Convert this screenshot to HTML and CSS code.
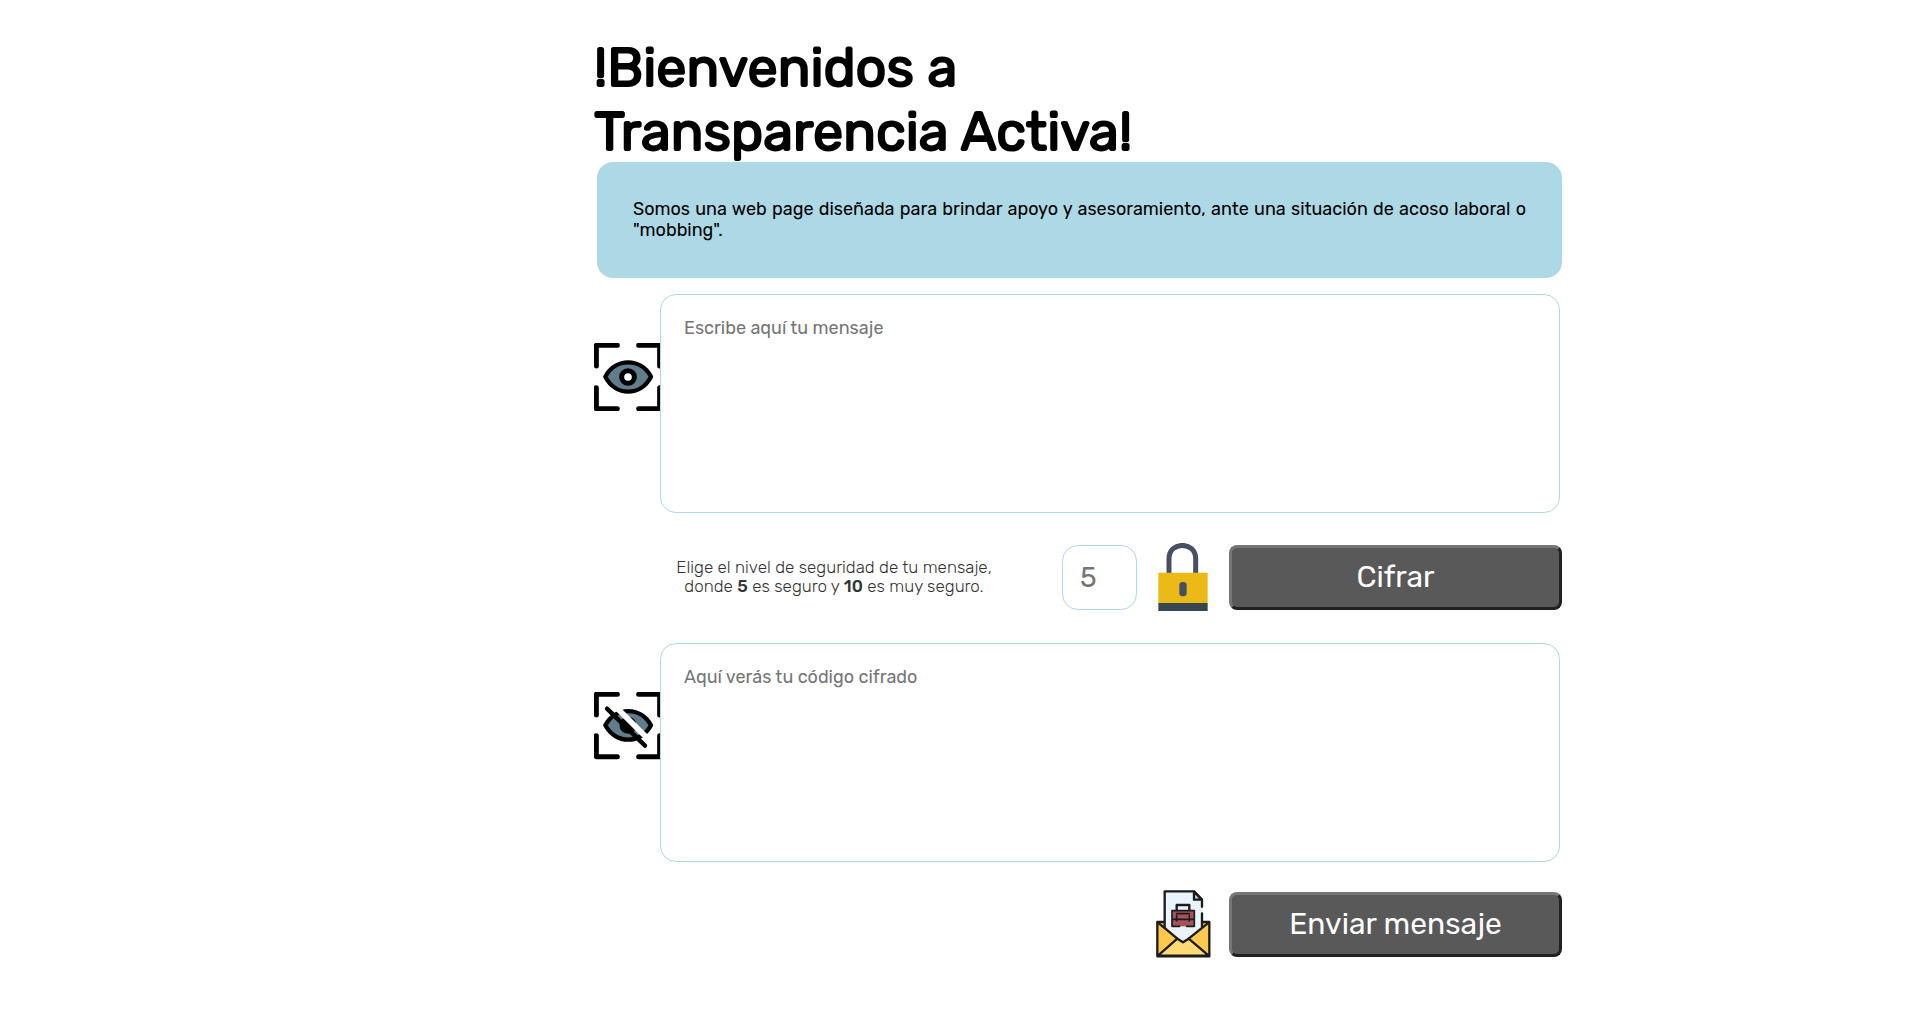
FILE: index.html
```html
<!DOCTYPE html>
<html lang="es">
<head>
<meta charset="utf-8">
<meta name="viewport" content="width=device-width, initial-scale=1">
<title>Transparencia Activa</title>
<link rel="stylesheet" href="styles.css">
</head>
<body>
<main class="page">
  <h1 class="title">!Bienvenidos a<br>Transparencia Activa!</h1>
  <p class="intro">Somos una web page diseñada para brindar apoyo y asesoramiento, ante una situación de acoso laboral o "mobbing".</p>
  <form class="cipher">
    <div class="field">
      <svg class="field-icon" viewBox="27 36 198 204" aria-hidden="true">
        <g fill="none" stroke="#000" stroke-width="15" stroke-linecap="round" stroke-linejoin="round">
          <path d="M97 43H34V105M161 43H224V105M34 170V233H97M224 170V233H161"/>
          <path fill="#607d8b" stroke-width="13" d="M61 137C92 80 167 80 198 137C167 197 92 197 61 137Z"/>
          <circle cx="129" cy="138" r="19" fill="#fff"/>
        </g>
      </svg>
      <textarea class="message" aria-label="Mensaje" placeholder="Escribe aquí tu mensaje"></textarea>
    </div>
    <div class="actions">
      <label class="hint" for="level">Elige el nivel de seguridad de tu mensaje,<br>donde <b>5</b> es seguro y <b>10</b> es muy seguro.</label>
      <input class="level" id="level" type="number" min="5" max="10" placeholder="5">
      <svg class="action-icon" viewBox="27 39 204 204" aria-hidden="true">
        <path d="M87 132V86C87 33 167 33 167 86V132" fill="none" stroke="#464f66" stroke-width="15"/>
        <path fill="#ebba16" d="M55 128H203V220H55Z"/>
        <path fill="#37474f" d="M55 219H203V243H55Z"/>
        <rect x="118" y="156" width="22" height="43" rx="10" fill="#464f66"/>
      </svg>
      <button class="button" type="button">Cifrar</button>
    </div>
    <div class="field">
      <svg class="field-icon" viewBox="27 30 198 204" aria-hidden="true">
        <g fill="none" stroke="#000" stroke-width="15" stroke-linecap="round" stroke-linejoin="round">
          <path d="M97 37H34V99M161 37H224V99M34 161V224H97M224 161V224H161"/>
          <path fill="#607d8b" stroke-width="13" d="M61 130C92 73 167 73 198 130C167 187 92 187 61 130Z"/>
          <circle cx="129" cy="130" r="18" fill="#000"/>
          <path stroke="#fff" stroke-width="17" stroke-linecap="butt" d="M80 62L196 178"/>
          <path stroke-width="13" d="M66 80L180 191"/>
        </g>
      </svg>
      <textarea class="message" aria-label="Código cifrado" placeholder="Aquí verás tu código cifrado"></textarea>
    </div>
    <div class="actions">
      <svg class="action-icon" viewBox="27 33 204 204" aria-hidden="true">
        <g stroke="#1c1c1c" stroke-width="7" stroke-linecap="round" stroke-linejoin="round">
          <path fill="#ffc950" d="M52 129H208V232H52Z"/>
          <path fill="#e9f4fd" stroke="none" d="M74 37H162L186 62V141L130 190L74 141Z"/>
          <path fill="none" d="M74 145V37H162L186 62V83M186 103V143"/>
          <path fill="#b9dcf0" d="M162 38V62H185Z"/>
          <path fill="#ffda73" d="M54 230L112 179L129 190L146 179L206 230Z"/>
          <path fill="none" d="M54 131L112 179M206 131L146 179"/>
          <path fill="none" d="M110 92V78H148V92"/>
          <path fill="#a4545a" stroke="none" d="M96 95H163V142H96Z"/>
          <path fill="none" stroke-width="5" d="M119 142H96V95H163V142H140M96 121H163M110 110V125M148 110V125M110 104H148"/>
        </g>
      </svg>
      <button class="button" type="button">Enviar mensaje</button>
    </div>
  </form>
</main>
</body>
</html>
```
FILE: styles.css
```css
* {
  box-sizing: border-box;
}

body {
  margin: 0;
  background: #fff;
  color: #000;
  font-family: Rubik, Roboto, "Liberation Sans", sans-serif;
  display: grid;
  grid-template-columns: 594fr 968fr 350fr;
}

.page {
  grid-column: 2;
  padding: 36px 0 72px;
}

.title {
  margin: 0 0 -2px;
  font-size: 54px;
  line-height: 64px;
  font-weight: 400;
  -webkit-text-stroke: 2px #000;
}

.intro {
  margin: 0 0 16px 3px;
  padding: 37px 36px;
  border-radius: 16px;
  background: lightblue;
  font-size: 18px;
  line-height: 21px;
  text-align: justify;
}

.field {
  display: flex;
  align-items: flex-start;
  padding-right: 2px;
}

.field-icon {
  flex: none;
  width: 66px;
  height: 68px;
  margin-top: 49px;
}

.message {
  display: block;
  flex: 1;
  min-width: 0;
  height: 219px;
  padding: 22px 23px;
  border: 1px solid lightblue;
  border-radius: 16px;
  background: #fff;
  font: inherit;
  font-size: 18px;
  line-height: 22px;
  resize: none;
}

.message::placeholder,
.level::placeholder {
  color: #757575;
}

.actions {
  display: flex;
  align-items: center;
  justify-content: flex-end;
  gap: 12px;
  height: 68px;
  margin: 30px 0 32px 66px;
}

.actions:last-child {
  margin: 28px 0 0 66px;
}

.hint {
  flex: 1;
  margin-right: 42px;
  color: #333;
  font-size: 17px;
  font-weight: 300;
  line-height: 19px;
  text-align: center;
}

.hint b {
  font-weight: 500;
}

.level {
  width: 75px;
  height: 65px;
  padding: 0 17px;
  border: 1px solid lightblue;
  border-radius: 16px;
  font: inherit;
  font-size: 28px;
  appearance: textfield;
}

.level::-webkit-inner-spin-button {
  display: none;
}

.action-icon {
  flex: none;
  width: 68px;
  height: 68px;
}

.button {
  width: 333px;
  height: 65px;
  border: 3px outset #767676;
  border-radius: 8px;
  background: #595959;
  color: #fff;
  font: inherit;
  font-size: 30px;
}
```
